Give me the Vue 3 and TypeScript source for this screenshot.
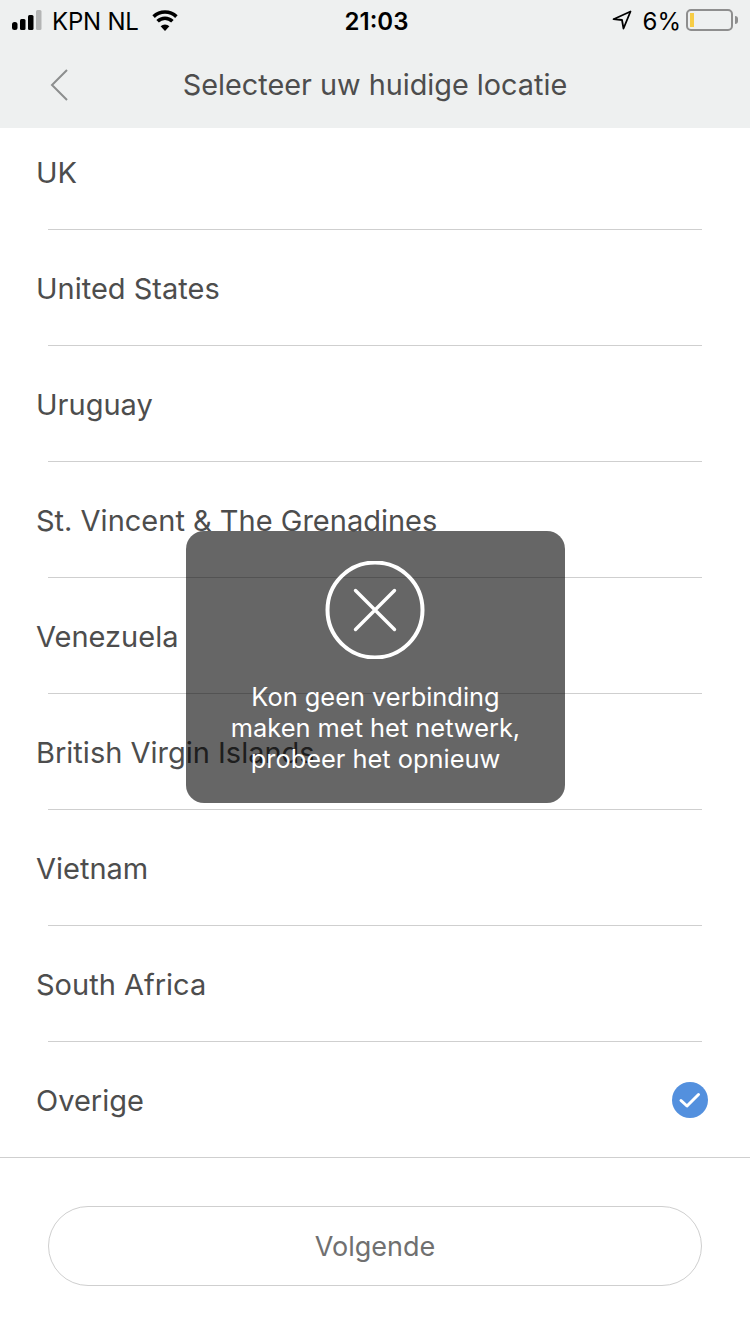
<script setup lang="ts">
const countries = [
  'UK',
  'United States',
  'Uruguay',
  'St. Vincent & The Grenadines',
  'Venezuela',
  'British Virgin Islands',
  'Vietnam',
  'South Africa',
  'Overige',
]
const selected = 'Overige'
</script>

<template>
  <div class="page">
    <header class="top">
      <div class="status">
        <div class="status-left">
          <svg class="signal" width="33" height="20" viewBox="0 0 33 20">
            <rect x="0" y="12" width="5.5" height="8" rx="2.5" fill="#000" />
            <rect x="8" y="9" width="5.5" height="11" rx="1.5" fill="#000" />
            <rect x="16" y="5" width="5.5" height="15" rx="1.5" fill="#000" />
            <rect x="24" y="0" width="5.5" height="20" rx="1.5" fill="#b4b5b5" />
          </svg>
          <span class="carrier">KPN NL</span>
          <svg class="wifi" width="28" height="21" viewBox="0 0 28 21">
            <path d="M14 21 L9.6 16.2 A6.4 6.4 0 0 1 18.4 16.2 Z" fill="#000" />
            <path d="M6.6 12.9 A10.6 10.6 0 0 1 21.4 12.9 M2.6 8.2 A16.6 16.6 0 0 1 25.4 8.2" transform="translate(0 -1.6)" fill="none" stroke="#000" stroke-width="3.6" />
          </svg>
        </div>
        <span class="time">21:03</span>
        <div class="status-right">
          <svg class="arrow" width="20" height="20" viewBox="0 0 20 20">
            <path d="M18.5 1.5 L1.5 9.2 L10 10 L11.5 18.5 Z" fill="none" stroke="#000" stroke-width="1.8" stroke-linejoin="round" />
          </svg>
          <span class="percent">6%</span>
          <div class="battery">
            <div class="battery-body"><div class="battery-fill"></div></div>
            <div class="battery-tip"></div>
          </div>
        </div>
      </div>
      <div class="nav">
        <svg class="back" width="18" height="32" viewBox="0 0 18 32">
          <path d="M17 1 L2 16 L17 31" fill="none" stroke="#8c8e8e" stroke-width="2" />
        </svg>
        <h1 class="title">Selecteer uw huidige locatie</h1>
      </div>
    </header>

    <main class="list">
      <div class="list-inner">
        <div v-for="name in countries" :key="name" class="row">
          <span class="name">{{ name }}</span>
          <svg v-if="name === selected" class="check" width="36" height="36" viewBox="0 0 36 36">
            <circle cx="18" cy="18" r="18" fill="#5390de" />
            <path d="M9 18.5 L15 24 L26.5 12.5" fill="none" stroke="#fff" stroke-width="3" stroke-linecap="round" stroke-linejoin="round" />
          </svg>
        </div>
      </div>
    </main>

    <footer class="bottom">
      <button class="next" type="button">Volgende</button>
    </footer>

    <div class="toast">
      <svg class="toast-icon" width="100" height="98" viewBox="0 0 100 98">
        <circle cx="50" cy="49" r="47.5" fill="none" stroke="#fff" stroke-width="4" />
        <path d="M30.5 29.5 L69.5 68.5 M69.5 29.5 L30.5 68.5" fill="none" stroke="#fff" stroke-width="3.4" stroke-linecap="round" />
      </svg>
      <p class="toast-text">Kon geen verbinding<br />maken met het netwerk,<br />probeer het opnieuw</p>
    </div>
  </div>
</template>

<style>
html,
body {
  margin: 0;
  background: #fff;
}
</style>

<style scoped>
.page {
  position: relative;
  width: 750px;
  height: 1334px;
  overflow: hidden;
  background: #fff;
  display: flex;
  flex-direction: column;
  font-family: Inter, "Liberation Sans", sans-serif;
}

.top {
  height: 128px;
  flex-shrink: 0;
  background: #eef0f0;
}

.status {
  height: 40px;
  display: flex;
  align-items: center;
  justify-content: space-between;
  position: relative;
  padding: 2px 12px 0 12px;
  box-sizing: border-box;
  color: #000;
  font-size: 24px;
}

.status-left,
.status-right {
  display: flex;
  align-items: center;
}

.signal {
  margin: -2px 7px 0 0;
}

.carrier {
  letter-spacing: -0.2px;
}

.wifi {
  margin: -2px 0 0 12px;
}

.time {
  position: absolute;
  left: 3px;
  right: 0;
  text-align: center;
  font-weight: 600;
}

.arrow {
  margin: -2px 11px 0 0;
}

.battery {
  display: flex;
  align-items: center;
  margin: -2px 0 0 5px;
}

.battery-body {
  width: 47px;
  height: 22px;
  box-sizing: border-box;
  border: 2px solid #8e8e8e;
  border-radius: 5px;
  padding: 2px;
}

.battery-fill {
  width: 4px;
  height: 100%;
  background: #f7cd46;
}

.battery-tip {
  width: 3px;
  height: 8px;
  margin-left: 2px;
  background: #8e8e8e;
  border-radius: 0 3px 3px 0;
}

.nav {
  height: 88px;
  position: relative;
  display: flex;
  align-items: center;
  justify-content: center;
}

.back {
  position: absolute;
  left: 50px;
  top: 29px;
}

.title {
  margin: 0;
  font-size: 28.8px;
  font-weight: 400;
  color: #4d4d4d;
}

.list {
  height: 1030px;
  flex-shrink: 0;
  overflow: hidden;
  border-bottom: 1px solid #cfcfcf;
  box-sizing: border-box;
}

.list-inner {
  margin-top: -14px;
}

.row {
  height: 116px;
  box-sizing: border-box;
  position: relative;
  display: flex;
  align-items: center;
  justify-content: space-between;
  padding: 0 42px 0 36px;
  color: #4d4d4d;
  font-size: 29px;
}

.row:not(:last-child)::after {
  content: "";
  position: absolute;
  left: 48px;
  right: 48px;
  bottom: 0;
  height: 1px;
  background: #cfcfcf;
}

.bottom {
  flex: 1;
  padding: 48px 48px 0;
}

.next {
  display: block;
  width: 100%;
  height: 80px;
  border: 1px solid #cfcfcf;
  border-radius: 40px;
  background: #fff;
  color: #707070;
  font-family: inherit;
  font-size: 27px;
}

.toast {
  position: absolute;
  left: 186px;
  top: 531px;
  width: 379px;
  height: 272px;
  box-sizing: border-box;
  padding-top: 30px;
  border-radius: 18px;
  background: rgba(0, 0, 0, 0.6);
  display: flex;
  flex-direction: column;
  align-items: center;
}

.toast-icon {
  margin-left: -2px;
}

.toast-text {
  margin: 22px 0 0;
  color: #fff;
  font-size: 25.4px;
  line-height: 31px;
  text-align: center;
}
</style>
